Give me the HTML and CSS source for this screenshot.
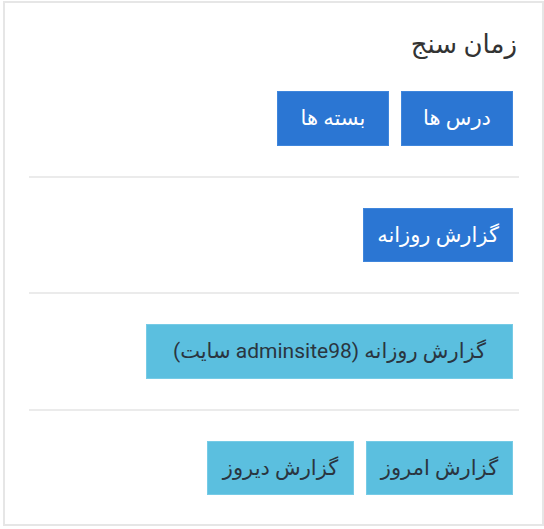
FILE: index.html
```html
<!DOCTYPE html>
<html lang="fa" dir="rtl">
<head>
<meta charset="utf-8">
<link rel="stylesheet" href="styles.css">
</head>
<body>
<div class="card">
  <h4 class="title">زمان سنج</h4>
  <div class="row">
    <a class="btn btn-primary w-sm">درس ها</a>
    <a class="btn btn-primary w-sm">بسته ها</a>
  </div>
  <hr class="sep">
  <div class="row">
    <a class="btn btn-primary w-md">گزارش روزانه</a>
  </div>
  <hr class="sep">
  <div class="row">
    <a class="btn btn-info w-lg">گزارش روزانه (adminsite98 سایت)</a>
  </div>
  <hr class="sep">
  <div class="row">
    <a class="btn btn-info w-rep">گزارش امروز</a>
    <a class="btn btn-info w-rep">گزارش دیروز</a>
  </div>
</div>
</body>
</html>
```
FILE: styles.css
```css
html, body {
  margin: 0;
  padding: 0;
  background: #ffffff;
}
body {
  font-family: Roboto, "DejaVu Sans", sans-serif;
  color: #333333;
}
.card {
  box-sizing: border-box;
  margin: 1px 0 0 1px;
  width: 541px;
  height: 525px;
  border: 2px solid #e6e6e6;
  padding: 0 23px 0 24px;
  direction: rtl;
}
.title {
  margin: 24px 2px 0 0;
  font-size: 26px;
  font-weight: normal;
  line-height: 34px;
  color: #333333;
}
.row {
  display: flex;
  gap: 12px;
  padding-right: 6px;
}
.title + .row {
  margin-top: 30px;
}
.sep {
  border: 0;
  height: 2px;
  background: #ebebeb;
  margin: 30px 0;
}
.btn {
  box-sizing: border-box;
  height: 54.5px;
  display: inline-flex;
  align-items: center;
  justify-content: center;
  padding: 0 12px;
  font-size: 21px;
  white-space: nowrap;
  text-decoration: none;
  border: 1px solid transparent;
}
.w-sm { width: 112px; }
.w-md { width: 150px; }
.w-lg { width: 367px; }
.w-rep { width: 147px; }
.btn-primary {
  background: #2b76d3;
  border-color: #3f86dc;
  color: #ffffff;
}
.btn-info {
  background: #5bbfdf;
  border-color: #76cbe6;
  color: #2a3540;
}
```
